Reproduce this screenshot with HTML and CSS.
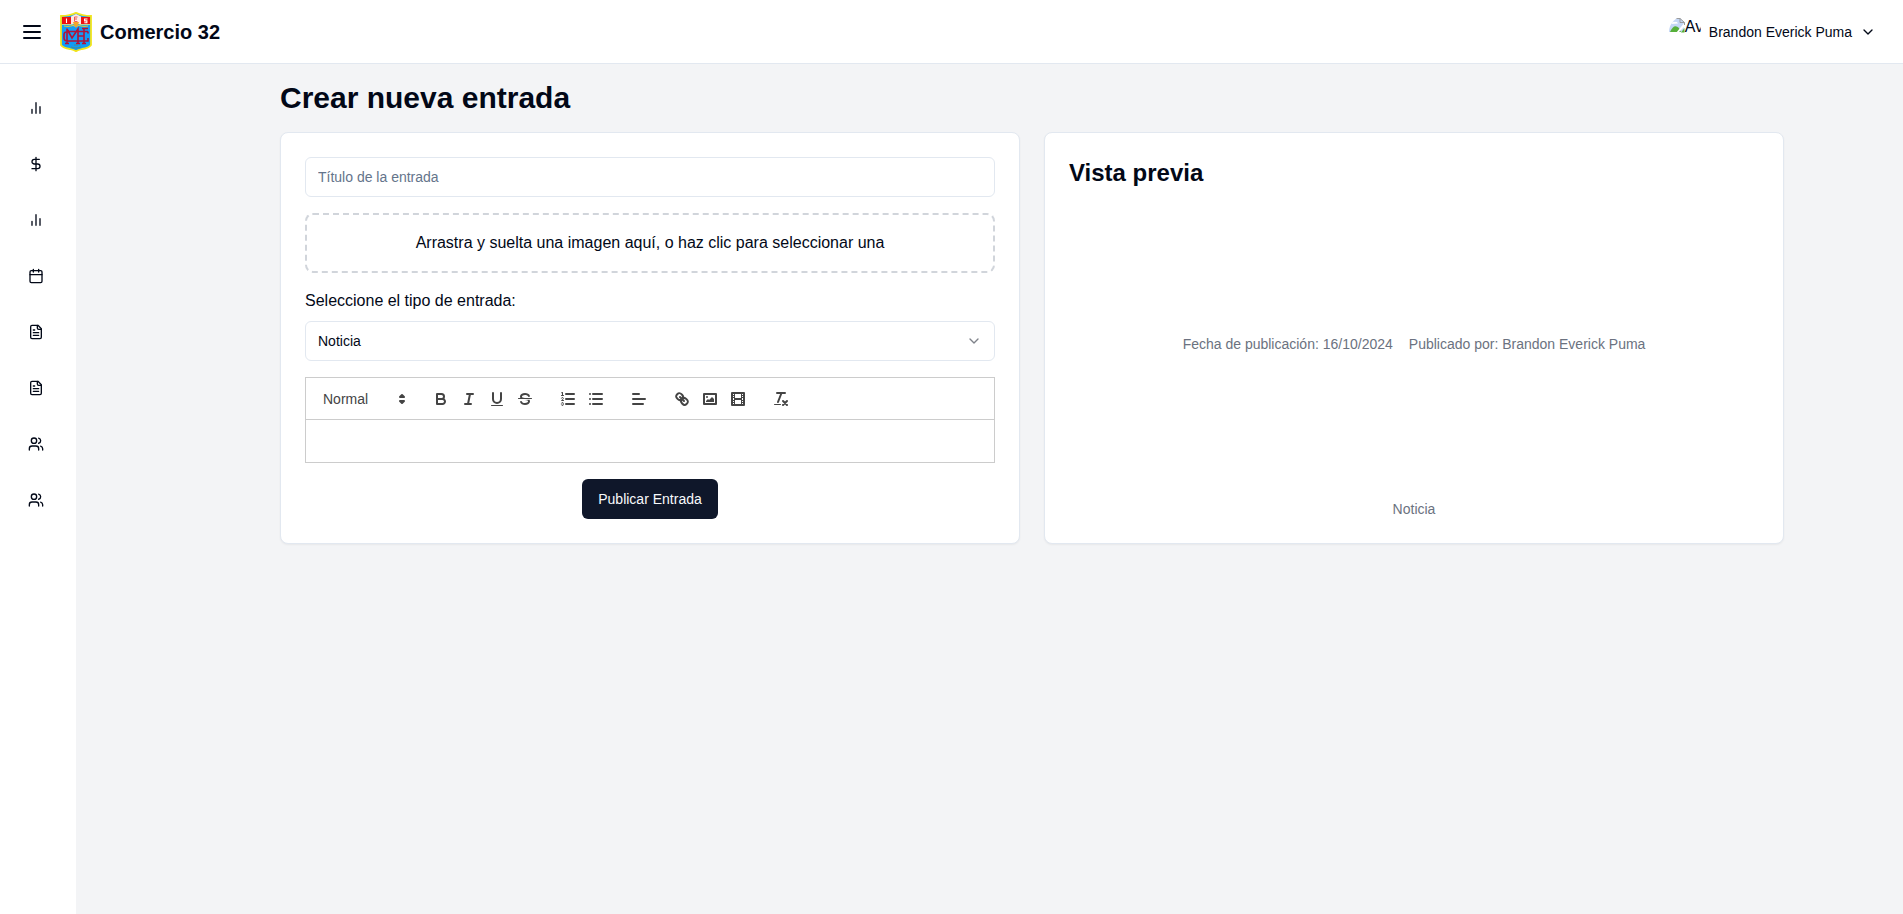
FILE: index.html
```html
<!DOCTYPE html>
<html lang="es">
<head>
<meta charset="utf-8">
<title>Comercio 32</title>
<link rel="stylesheet" href="styles.css">
</head>
<body>
<svg class="defs" aria-hidden="true">
  <symbol id="i-bars" viewBox="0 0 24 24"><path d="M18 20V10M12 20V4M6 20v-6"/></symbol>
  <symbol id="i-dollar" viewBox="0 0 24 24"><path d="M12 2v20M17 5H9.5a3.5 3.5 0 0 0 0 7h5a3.5 3.5 0 0 1 0 7H6"/></symbol>
  <symbol id="i-calendar" viewBox="0 0 24 24"><path d="M8 2v4M16 2v4M3 10h18"/><rect x="3" y="4" width="18" height="18" rx="2"/></symbol>
  <symbol id="i-file" viewBox="0 0 24 24"><path d="M15 2H6a2 2 0 0 0-2 2v16a2 2 0 0 0 2 2h12a2 2 0 0 0 2-2V7Z"/><path d="M14 2v4a2 2 0 0 0 2 2h4M10 9H8M16 13H8M16 17H8"/></symbol>
  <symbol id="i-users" viewBox="0 0 24 24"><path d="M16 21v-2a4 4 0 0 0-4-4H6a4 4 0 0 0-4 4v2"/><circle cx="9" cy="7" r="4"/><path d="M22 21v-2a4 4 0 0 0-3-3.87M16 3.13a4 4 0 0 1 0 7.75"/></symbol>
  <symbol id="i-chevron" viewBox="0 0 24 24"><path d="m6 9 6 6 6-6"/></symbol>
</svg>

<header class="header">
  <div class="brand">
    <svg class="icon menu" viewBox="0 0 24 24"><path d="M4 6h16M4 12h16M4 18h16"/></svg>
    <svg class="logo" viewBox="0 0 32 40">
      <path d="M1 4 Q10 4 16 .8 Q22 4 31 4 V33 Q29 36 22 37 Q18 38 16 39.2 Q14 38 10 37 Q3 36 1 33Z" fill="#109cf8" stroke="#f3e51c" stroke-width="1.8"/>
      <path d="M2 5H11V12H2ZM21 5H30V12H21Z" fill="#ee1010"/>
      <path d="M11 4.5 16 2 21 4.5V12H11Z" fill="#fbe9e4"/>
      <path d="M2 12.5H12L14 14H18L20 12.5H30" fill="none" stroke="#b9d6a0"/>
      <path d="M13 10h6l-1 3-2 3-2-3Z" fill="#f2a62a"/>
      <path d="M4 14q6 1 10-1M28 14q-6 1-10-1" fill="none" stroke="#dfc83a" stroke-width="1.2"/>
      <path d="M6.5 6.500V11M27.500 7H24.600V8.900H26.900V10.800H24.300" fill="none" stroke="#fff" stroke-width="1.1"/>
      <path d="M14.500 5V9.500h3M17.500 5h-3M14.500 7h2.500" fill="none" stroke="#ec5b54"/>
      <path d="M7 16.500V31.500M5 31.500H9M7 17 12 26 18 17V31.500M16 31.500H20M24 16.500V31.500M22 16.500H28M22 31.500H26M18 24H24M28 19.500H9Q4 19.500 4 22.500V26Q4 29 8 29H28V26M28 19.500V21.500" fill="none" stroke="#b01338" stroke-width="1.600"/>
      <path d="M11 35q5 2 10 0M14 33h4" fill="none" stroke="#4b8e86" stroke-width="1.2"/>
    </svg>
    <span class="brand-name">Comercio 32</span>
  </div>
  <div class="user">
    <div class="avatar">
      <svg class="broken" viewBox="0 0 16 16">
        <path d="M0 1H11L15 5V15H0Z" fill="#c5d7f5"/>
        <path d="M1 15q4-9 9-4l2 4Z" fill="#57b03a"/>
        <path d="M2 7q1-3 4-2 2-1 3 1.500Z" fill="#fff"/>
        <path d="M16 5V9L9 16H7Z" fill="#fff"/>
        <path d="M1 1.500H11L15.500 5.500V8M11 1.500V5.500H15.500" fill="none" stroke="#9b9b9b"/>
        <path d="M12 15.500h3.500V11Z" fill="#57b03a"/>
      </svg>
      <span>Av</span>
    </div>
    <span class="user-name">Brandon Everick Puma</span>
    <svg class="icon small"><use href="#i-chevron"/></svg>
  </div>
</header>

<div class="layout">
  <nav class="sidebar">
    <svg class="icon small"><use href="#i-bars"/></svg>
    <svg class="icon small"><use href="#i-dollar"/></svg>
    <svg class="icon small"><use href="#i-bars"/></svg>
    <svg class="icon small"><use href="#i-calendar"/></svg>
    <svg class="icon small"><use href="#i-file"/></svg>
    <svg class="icon small"><use href="#i-file"/></svg>
    <svg class="icon small"><use href="#i-users"/></svg>
    <svg class="icon small"><use href="#i-users"/></svg>
  </nav>
  <main class="main">
    <div class="container">
      <h1>Crear nueva entrada</h1>
      <div class="columns">
        <section class="card form">
          <input class="field" type="text" placeholder="Título de la entrada">
          <div class="dropzone">Arrastra y suelta una imagen aquí, o haz clic para seleccionar una</div>
          <div class="type">
            <span>Seleccione el tipo de entrada:</span>
            <div class="field select">Noticia<svg class="icon small faded"><use href="#i-chevron"/></svg></div>
          </div>
          <div class="editor">
            <div class="toolbar">
              <div class="picker">Normal
                <svg viewBox="0 0 18 18"><path class="f s" d="M7 11 9 13 11 11ZM7 7 9 5 11 7Z"/></svg>
              </div>
              <div class="group">
                <svg viewBox="0 0 18 18"><path class="s" d="M5,4H9.5A2.5,2.5,0,0,1,12,6.500v0A2.500,2.500,0,0,1,9.500,9H5A0,0,0,0,1,5,9V4A0,0,0,0,1,5,4Z"/><path class="s" d="M5,9h5.500A2.500,2.500,0,0,1,13,11.500v0A2.500,2.500,0,0,1,10.500,14H5a0,0,0,0,1,0,0V9A0,0,0,0,1,5,9Z"/></svg>
                <svg viewBox="0 0 18 18"><path class="s" d="M7 4H13M5 14H11M8 14 10 4"/></svg>
                <svg viewBox="0 0 18 18"><path class="s" d="M5,3V9a4.012,4.012,0,0,0,4,4H9a4.012,4.012,0,0,0,4-4V3"/><rect class="f" x="3" y="15" width="12" height="1" rx=".5"/></svg>
                <svg viewBox="0 0 18 18"><path class="s thin" d="M15.500 8.500H2.500"/><path class="f" d="M9.007,8C6.542,7.791,6,7.519,6,6.500,6,5.792,7.283,5,9,5c1.571,0,2.765.679,2.969,1.309a1,1,0,0,0,1.900-.617C13.356,4.106,11.354,3,9,3,6.200,3,4,4.538,4,6.500a3.200,3.200,0,0,0,.500,1.843Z"/><path class="f" d="M8.984,10C11.457,10.208,12,10.479,12,11.500c0,0.708-1.283,1.500-3,1.500-1.571,0-2.765-.679-2.969-1.309a1,1,0,1,0-1.900.617C4.644,13.894,6.646,15,9,15c2.800,0,5-1.538,5-3.500a3.200,3.200,0,0,0-.500-1.843Z"/></svg>
              </div>
              <div class="group">
                <svg viewBox="0 0 18 18"><path class="s" d="M7 4H15M7 9H15M7 14H15"/><path class="s thin" d="M2.500 5.500H4.500"/><path class="f" d="M3.500,6A0.500,0.500,0,0,1,3,5.500V3.085l-0.276.138A0.500,0.500,0,0,1,2.053,3c-0.124-.247-0.023-0.324.224-0.447l1-.500A0.500,0.500,0,0,1,4,2.500v3A0.500,0.500,0,0,1,3.500,6Z"/><path class="s thin" d="M4.500,10.500h-2c0-.234,1.850-1.076,1.850-2.234A0.959,0.959,0,0,0,2.500,8.156"/><path class="s thin" d="M2.500,14.846a0.959,0.959,0,0,0,1.850-.109A0.700,0.700,0,0,0,3.750,14a0.688,0.688,0,0,0,.600-0.736,0.959,0.959,0,0,0-1.850-.109"/></svg>
                <svg viewBox="0 0 18 18"><path class="s" d="M6 4H15M6 9H15M6 14H15M3 4H3M3 9H3M3 14H3"/></svg>
              </div>
              <div class="group">
                <svg viewBox="0 0 18 18"><path class="s" d="M3 9H15M3 14H13M3 4H9"/></svg>
              </div>
              <div class="group">
                <svg viewBox="0 0 18 18"><path class="s" d="M7 7 11 11"/><path class="s" d="M8.900,4.577a3.476,3.476,0,0,1,.360,4.679A3.476,3.476,0,0,1,4.577,8.900C3.185,7.500,2.035,6.400,4.217,4.217S7.500,3.185,8.900,4.577Z"/><path class="s" d="M13.423,9.100a3.476,3.476,0,0,0-4.679-.360,3.476,3.476,0,0,0,.360,4.679c1.392,1.392,2.500,2.542,4.679.360S14.815,10.500,13.423,9.100Z"/></svg>
                <svg viewBox="0 0 18 18"><rect class="s" x="3" y="4" width="12" height="10"/><circle class="f" cx="6" cy="7" r="1"/><path class="f" d="M5 12 5 11 7 9 8 10 11 7 13 9 13 12Z"/></svg>
                <svg viewBox="0 0 18 18"><rect class="s" x="3" y="3" width="12" height="12"/><path class="f" d="M5 3h1v12H5ZM12 3h1v12h-1ZM5 8h8v2H5ZM3 5h3v1H3ZM3 7h3v1H3ZM3 10h3v1H3ZM3 12h3v1H3ZM12 5h3v1h-3ZM12 7h3v1h-3ZM12 10h3v1h-3ZM12 12h3v1h-3Z"/></svg>
              </div>
              <div class="group">
                <svg viewBox="0 0 18 18"><path class="s" d="M5 3H13M6 12 9.500 3M11 11 15 15M15 11 11 15"/><rect class="f" x="2" y="14" width="7" height="1" rx=".5"/></svg>
              </div>
            </div>
            <div class="editor-body"></div>
          </div>
          <button class="submit" type="button">Publicar Entrada</button>
        </section>
        <section class="card preview">
          <h2>Vista previa</h2>
          <div class="meta"><span>Fecha de publicación: 16/10/2024</span><span>Publicado por: Brandon Everick Puma</span></div>
          <div class="meta">Noticia</div>
        </section>
      </div>
    </div>
  </main>
</div>
</body>
</html>
```
FILE: styles.css
```css
*, *::before, *::after { box-sizing: border-box; }
body {
  margin: 0;
  height: 100vh;
  display: flex;
  flex-direction: column;
  overflow: hidden;
  background: #f3f4f6;
  color: #020817;
  font: 16px/24px "Liberation Sans", Arial, sans-serif;
}
h1, h2 { margin: 0; font-weight: 700; }
.defs { display: none; }
svg { display: block; flex: none; }
.icon {
  width: 24px;
  height: 24px;
  fill: none;
  stroke: currentColor;
  stroke-width: 2;
  stroke-linecap: round;
  stroke-linejoin: round;
}
.small { width: 16px; height: 16px; }
.faded { opacity: .5; }

.header {
  flex: none;
  height: 64px;
  padding: 0 27px 0 20px;
  display: flex;
  align-items: center;
  justify-content: space-between;
  background: #fff;
  border-bottom: 1px solid #e2e8f0;
}
.brand { display: flex; align-items: center; }
.logo { width: 32px; height: 40px; margin: 0 8px 0 16px; }
.brand-name { font-size: 20px; line-height: 28px; font-weight: 700; }
.user { display: flex; align-items: center; gap: 8px; font-size: 14px; line-height: 20px; }
.avatar {
  width: 32px;
  height: 32px;
  padding-top: 1px;
  display: flex;
  border-radius: 50%;
  overflow: hidden;
  font-size: 16px;
  line-height: 19px;
}
.broken { width: 16px; height: 16px; }

.layout { flex: 1; display: flex; min-height: 0; }
.sidebar {
  flex: none;
  width: 76px;
  padding: 36px 0 0 28px;
  display: flex;
  flex-direction: column;
  gap: 40px;
  background: #fff;
}
.main { flex: 1; padding-left: 85px; }
.container { max-width: 1536px; margin: 0 auto; padding: 16px; }
h1 { margin-bottom: 16px; font-size: 30px; line-height: 36px; }
.columns { display: grid; grid-template-columns: 1fr 1fr; gap: 24px; }
.card {
  padding: 24px;
  display: flex;
  flex-direction: column;
  background: #fff;
  border: 1px solid #e2e8f0;
  border-radius: 8px;
  box-shadow: 0 1px 2px rgba(0, 0, 0, .05);
}
.form { gap: 16px; }
.field {
  width: 100%;
  height: 40px;
  padding: 8px 12px;
  background: #fff;
  border: 1px solid #e2e8f0;
  border-radius: 6px;
  font: 14px/20px "Liberation Sans", Arial, sans-serif;
}
.field::placeholder { color: #64748b; }
.select { display: flex; align-items: center; justify-content: space-between; }
.dropzone {
  padding: 16px;
  border: 2px dashed #d1d5db;
  border-radius: 8px;
  text-align: center;
}
.type { display: flex; flex-direction: column; gap: 8px; }

.editor { height: 86px; display: flex; flex-direction: column; border: 1px solid #ccc; }
.toolbar {
  height: 41px;
  padding: 1px 8px 0;
  display: flex;
  align-items: center;
  gap: 15px;
  color: #444;
}
.editor-body { flex: 1; border-top: 1px solid #ccc; }
.group { display: flex; }
.group svg { width: 28px; height: 24px; padding: 3px 5px; }
.picker {
  width: 98px;
  padding: 0 1px 0 9px;
  display: flex;
  align-items: center;
  justify-content: space-between;
  font-size: 14px;
  line-height: 24px;
}
.picker svg { width: 18px; height: 18px; }
.s { stroke: #444; stroke-width: 2; stroke-linecap: round; stroke-linejoin: round; fill: none; }
.thin { stroke-width: 1; }
.f { fill: #444; }
.submit {
  align-self: center;
  height: 40px;
  padding: 8px 16px;
  border: 0;
  border-radius: 6px;
  background: #0f172a;
  color: #f8fafc;
  font: 500 14px/20px "Liberation Sans", Arial, sans-serif;
}

.preview { justify-content: space-between; }
h2 { font-size: 24px; line-height: 32px; }
.meta {
  display: flex;
  justify-content: center;
  gap: 16px;
  color: #6b7280;
  font-size: 14px;
  line-height: 20px;
}
```
